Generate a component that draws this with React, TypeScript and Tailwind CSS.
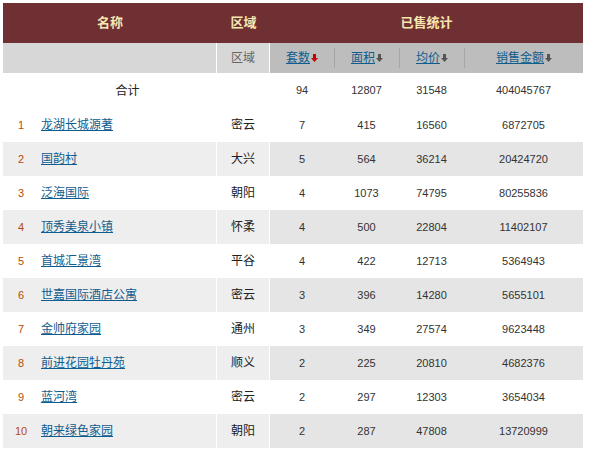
import React from 'react';

type Row = {
  rank: number;
  name: string;
  area: string;
  count: number;
  size: number;
  price: number;
  total: number;
};

const ROWS: Row[] = [
  { rank: 1, name: '龙湖长城源著', area: '密云', count: 7, size: 415, price: 16560, total: 6872705 },
  { rank: 2, name: '国韵村', area: '大兴', count: 5, size: 564, price: 36214, total: 20424720 },
  { rank: 3, name: '泛海国际', area: '朝阳', count: 4, size: 1073, price: 74795, total: 80255836 },
  { rank: 4, name: '顶秀美泉小镇', area: '怀柔', count: 4, size: 500, price: 22804, total: 11402107 },
  { rank: 5, name: '首城汇景湾', area: '平谷', count: 4, size: 422, price: 12713, total: 5364943 },
  { rank: 6, name: '世嘉国际酒店公寓', area: '密云', count: 3, size: 396, price: 14280, total: 5655101 },
  { rank: 7, name: '金帅府家园', area: '通州', count: 3, size: 349, price: 27574, total: 9623448 },
  { rank: 8, name: '前进花园牡丹苑', area: '顺义', count: 2, size: 225, price: 20810, total: 4682376 },
  { rank: 9, name: '蓝河湾', area: '密云', count: 2, size: 297, price: 12303, total: 3654034 },
  { rank: 10, name: '朝来绿色家园', area: '朝阳', count: 2, size: 287, price: 47808, total: 13720999 },
];

const GRID = 'grid grid-cols-[36px_178px_53px_64px_65px_65px_119px]';

function Arrow({ red }: { red?: boolean }) {
  return (
    <svg width="7" height="8" viewBox="0 0 7 8" className="inline-block ml-px">
      <rect x="2" y="0" width="3" height="4" fill={red ? '#c40000' : '#555555'} />
      <polygon points="0,4 7,4 3.5,8" fill={red ? '#c40000' : '#555555'} />
    </svg>
  );
}

function SortHead({ label, red, sep }: { label: string; red?: boolean; sep?: boolean }) {
  return (
    <div className="flex items-center bg-[#bdbdbd]">
      {sep && <div className="w-px h-5 bg-[#a6a6a6]" />}
      <div className="flex-1 flex items-center justify-center">
        <a href="#" className="text-[#0f5d8f] underline">
          {label}
        </a>
        <Arrow red={red} />
      </div>
    </div>
  );
}

export default function App() {
  return (
    <div className="bg-white w-[591px] h-[451px] pt-[3px] pl-[3px] text-[12px] text-[#222] font-['Liberation_Sans','Noto_Sans_CJK_SC',sans-serif]">
      <div className="w-[580px]">
        {/* header */}
        <div className={`${GRID} h-10 bg-[#6e3032] text-[#f8e6b0] font-bold text-[13px]`}>
          <div className="col-span-2 flex items-center justify-center">名称</div>
          <div className="flex items-center justify-center">区域</div>
          <div className="col-span-4 flex items-center justify-center">已售统计</div>
        </div>
        <div className={`${GRID} h-[30px]`}>
          <div className="col-span-2 bg-[#d7d7d7] border-r border-white" />
          <div className="bg-[#d7d7d7] border-r border-white flex items-center justify-center text-[#666]">区域</div>
          <SortHead label="套数" red />
          <SortHead label="面积" sep />
          <SortHead label="均价" sep />
          <SortHead label="销售金额" sep />
        </div>

        {/* total */}
        <div className={`${GRID} h-[35px] items-center text-center`}>
          <div />
          <div className="border-r border-white">合计</div>
          <div className="border-r border-white" />
          <div className="text-[11px] text-[#333]">94</div>
          <div className="text-[11px] text-[#333]">12807</div>
          <div className="text-[11px] text-[#333]">31548</div>
          <div className="text-[11px] text-[#333]">404045767</div>
        </div>

        {ROWS.map((r) => {
          const even = r.rank % 2 === 0;
          const left = even ? 'bg-[#eeeeee]' : 'bg-white';
          const right = even ? 'bg-[#e5e5e5]' : 'bg-white';
          return (
            <div key={r.rank} className={`${GRID} h-[34px]`}>
              <div className={`${left} flex items-center justify-center text-[11px] text-[#b44c0b]`}>{r.rank}</div>
              <div className={`${left} border-r border-white flex items-center pl-[2px]`}>
                <a href="#" className="text-[#0f5d8f] underline">
                  {r.name}
                </a>
              </div>
              <div className={`${left} border-r border-white flex items-center justify-center`}>{r.area}</div>
              <div className={`${right} flex items-center justify-center text-[11px] text-[#333]`}>{r.count}</div>
              <div className={`${right} flex items-center justify-center text-[11px] text-[#333]`}>{r.size}</div>
              <div className={`${right} flex items-center justify-center text-[11px] text-[#333]`}>{r.price}</div>
              <div className={`${right} flex items-center justify-center text-[11px] text-[#333]`}>{r.total}</div>
            </div>
          );
        })}
      </div>
    </div>
  );
}
